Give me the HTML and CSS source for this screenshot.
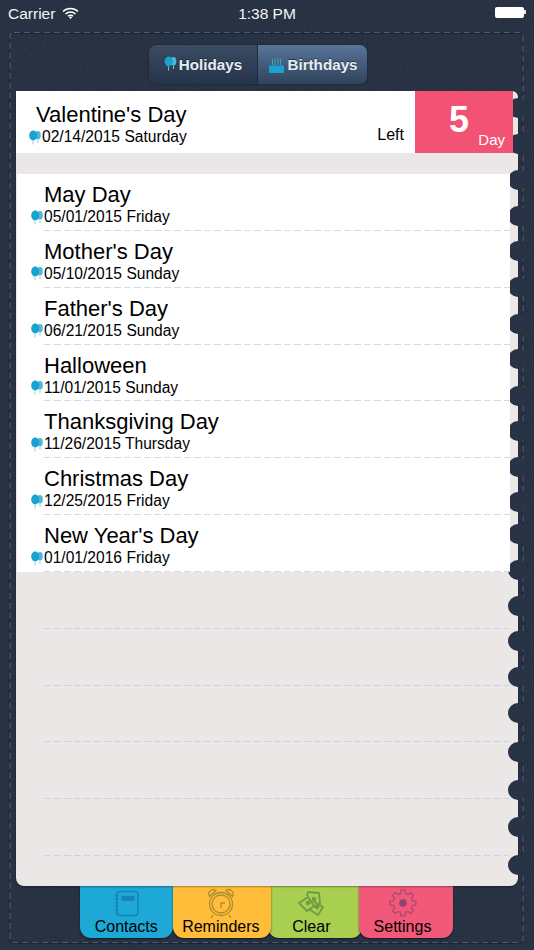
FILE: index.html
```html
<!DOCTYPE html>
<html lang="en">
<head>
<meta charset="utf-8">
<title>Holidays</title>
<link rel="stylesheet" href="styles.css">
</head>
<body>
<svg class="defs" width="0" height="0" aria-hidden="true">
  <symbol id="balloons" viewBox="0 0 12 15">
    <ellipse cx="8.900" cy="5.300" rx="2.900" ry="4.200" fill="#4fb7d9"/>
    <path d="M9 9.500v3.500M4 10.500v4" stroke="#86cfe6" stroke-width=".9" fill="none"/>
    <ellipse cx="4.200" cy="5.500" rx="4" ry="4.900" fill="#17a2d0"/>
  </symbol>
</svg>
<div class="screen">
  <svg class="leather" width="534" height="950" aria-hidden="true">
    <filter id="grain"><feTurbulence type="fractalNoise" baseFrequency="0.8" numOctaves="2" seed="4"/><feColorMatrix values="0 0 0 0 0  0 0 0 0 0  0 0 0 0 0  0 0 0 1.4 -0.55"/></filter>
    <rect width="534" height="950" filter="url(#grain)" opacity=".28"/>
    <rect x="10" y="32.500" width="513" height="910" rx="4" fill="none" stroke="#1b2534" stroke-width="1" transform="translate(-.8 .8)"/>
    <rect x="10" y="32.500" width="513" height="910" rx="4" fill="none" stroke="#4a5a70" stroke-width="1.200" stroke-dasharray="6 4"/>
  </svg>

  <header class="status">
    <div class="status-left">
      <span>Carrier</span>
      <svg class="wifi" viewBox="0 0 17 12" width="17" height="12"><path d="M1 4.500a10.600 10.600 0 0 1 15 0M3.500 7a7 7 0 0 1 10 0M6 9.300a3.500 3.500 0 0 1 5 0" fill="none" stroke="#fff" stroke-width="1.500"/><path d="M8.500 12l-1.500-1.600a2 2 0 0 1 3 0z" fill="#fff"/></svg>
    </div>
    <span class="status-time">1:38 PM</span>
    <div class="status-right"><span class="battery"></span><span class="battery-nub"></span></div>
  </header>

  <nav class="segment">
    <div class="seg seg-off">
      <svg class="seg-icon" width="13" height="15"><use href="#balloons"/></svg>
      <span>Holidays</span>
    </div>
    <div class="seg seg-on">
      <svg class="seg-cake" viewBox="0 0 15 15" width="15" height="15"><path d="M3.500 1v6M6 0v7M9 0v7M11.500 1v6" stroke="#3aa6cf" stroke-width="1" fill="none"/><rect y="7.500" width="15" height="7.500" rx=".8" fill="#1aa3d1"/></svg>
      <span>Birthdays</span>
    </div>
  </nav>

  <main class="page">
    <svg class="holes" width="40" height="795" viewBox="0 0 40 795" aria-hidden="true">
      <g fill="#283345">
        <circle cx="20" cy="17" r="10"/><circle cx="20" cy="53" r="10"/><circle cx="20" cy="89" r="10"/>
        <circle cx="20" cy="125" r="10"/><circle cx="20" cy="160" r="10"/><circle cx="20" cy="196" r="10"/>
        <circle cx="20" cy="233" r="10"/><circle cx="20" cy="268" r="10"/><circle cx="20" cy="305" r="10"/>
        <circle cx="20" cy="340" r="10"/><circle cx="20" cy="376" r="10"/><circle cx="20" cy="411" r="10"/>
        <circle cx="20" cy="443" r="10"/><circle cx="20" cy="479" r="10"/><circle cx="20" cy="515" r="10"/>
        <circle cx="20" cy="550" r="10"/><circle cx="20" cy="586" r="10"/><circle cx="20" cy="622" r="10"/>
        <circle cx="20" cy="661" r="10"/><circle cx="20" cy="699" r="10"/><circle cx="20" cy="736" r="10"/>
        <circle cx="20" cy="774" r="10"/>
      </g>
    </svg>

    <section class="next">
      <div class="next-main">
        <div class="next-title">Valentine's Day</div>
        <div class="date date-next"><svg class="balloon" width="12" height="15"><use href="#balloons"/></svg><span>02/14/2015 Saturday</span></div>
      </div>
      <span class="left-label">Left</span>
      <div class="count"><span class="count-num">5</span><span class="count-unit">Day</span></div>
    </section>

    <section class="list">
      <div class="row"><div class="title">May Day</div><div class="date"><svg class="balloon" width="12" height="15"><use href="#balloons"/></svg><span>05/01/2015 Friday</span></div></div>
      <div class="row"><div class="title">Mother's Day</div><div class="date"><svg class="balloon" width="12" height="15"><use href="#balloons"/></svg><span>05/10/2015 Sunday</span></div></div>
      <div class="row"><div class="title">Father's Day</div><div class="date"><svg class="balloon" width="12" height="15"><use href="#balloons"/></svg><span>06/21/2015 Sunday</span></div></div>
      <div class="row"><div class="title">Halloween</div><div class="date"><svg class="balloon" width="12" height="15"><use href="#balloons"/></svg><span>11/01/2015 Sunday</span></div></div>
      <div class="row"><div class="title">Thanksgiving Day</div><div class="date"><svg class="balloon" width="12" height="15"><use href="#balloons"/></svg><span>11/26/2015 Thursday</span></div></div>
      <div class="row"><div class="title">Christmas Day</div><div class="date"><svg class="balloon" width="12" height="15"><use href="#balloons"/></svg><span>12/25/2015 Friday</span></div></div>
      <div class="row"><div class="title">New Year's Day</div><div class="date"><svg class="balloon" width="12" height="15"><use href="#balloons"/></svg><span>01/01/2016 Friday</span></div></div>
    </section>

    <section class="blanks">
      <div class="row-blank"></div>
      <div class="row-blank"></div>
      <div class="row-blank"></div>
      <div class="row-blank"></div>
      <div class="row-blank"></div>
    </section>
  </main>

  <footer class="tabs">
    <div class="tab tab-blue">
      <svg class="tab-icon" viewBox="0 0 28 28" width="28" height="28" fill="none" stroke="#1683bd" stroke-width="1.500">
        <rect x="5" y="2.500" width="21" height="24" rx="3"/>
        <path d="M2.500 6.500h4M2.500 10h4M2.500 13.500h4M2.500 17h4M2.500 20.500h4M2.500 24h4" stroke-width="1.200"/>
        <rect x="9.500" y="7" width="13" height="5" fill="#1683bd" stroke="none"/>
      </svg>
      <span>Contacts</span>
    </div>
    <div class="tab tab-yellow">
      <svg class="tab-icon tab-icon-clock" viewBox="0 0 28 32" width="28" height="32" fill="none" stroke="#ab8c33" stroke-width="1.300">
        <circle cx="14" cy="17" r="11.500"/>
        <circle cx="14" cy="17" r="9"/>
        <path d="M2.500 9.500A4.500 4.500 0 0 1 9 3.500zM25.500 9.500A4.500 4.500 0 0 0 19 3.500z"/>
        <path d="M14 21v-5h4M6 28l-2 3M22 28l2 3"/>
      </svg>
      <span>Reminders</span>
    </div>
    <div class="tab tab-green">
      <svg class="tab-icon tab-icon-clear" viewBox="0 0 28 28" width="28" height="28" fill="none" stroke="#6f9a43" stroke-width="1.800" stroke-linejoin="round">
        <path d="M2 13l9-6 6 9-7 5z"/>
        <path d="M10 6l1-4 11 1 1 11-6 2"/>
        <path d="M16 11l10 6-5 8-9-6"/>
        <rect x="9" y="11" width="4" height="4" fill="#6f9a43" stroke="none" transform="rotate(-30 11 13)"/>
        <rect x="15" y="7" width="4" height="4" fill="#6f9a43" stroke="none" transform="rotate(10 17 9)"/>
        <rect x="18" y="15" width="4" height="4" fill="#6f9a43" stroke="none" transform="rotate(30 20 17)"/>
      </svg>
      <span>Clear</span>
    </div>
    <div class="tab tab-pink">
      <svg class="tab-icon" viewBox="0 0 28 28" width="28" height="28">
        <path d="M11.630 4.490L11.970 1.160L16.030 1.160L16.370 4.490L19.050 5.600L21.640 3.480L24.520 6.360L22.400 8.950L23.510 11.630L26.840 11.970L26.840 16.030L23.510 16.370L22.400 19.050L24.520 21.640L21.640 24.520L19.050 22.400L16.370 23.510L16.030 26.840L11.970 26.840L11.630 23.510L8.950 22.400L6.360 24.520L3.480 21.640L5.600 19.050L4.490 16.370L1.160 16.030L1.160 11.970L4.490 11.630L5.600 8.950L3.480 6.360L6.360 3.480L8.950 5.600Z" fill="none" stroke="#b34a73" stroke-width="1.500" stroke-linejoin="round"/>
        <circle cx="14" cy="14" r="3.800" fill="#8f4472"/>
      </svg>
      <span>Settings</span>
    </div>
  </footer>
</div>
</body>
</html>
```
FILE: styles.css
```css
* { box-sizing: border-box; }

html, body {
  margin: 0;
  padding: 0;
  background: #2a3547;
}

.defs { position: absolute; }

.screen {
  position: relative;
  width: 534px;
  height: 950px;
  overflow: hidden;
  display: flex;
  flex-direction: column;
  background: #2a3547;
  font-family: "Liberation Sans", Arial, sans-serif;
  color: #000;
}

.leather {
  position: absolute;
  left: 0;
  top: 0;
}

/* status bar */
.status {
  position: relative;
  height: 20px;
  padding: 0 8px;
  display: grid;
  grid-template-columns: 1fr auto 1fr;
  align-items: center;
  color: #f2f4f6;
  font-size: 15.500px;
  line-height: 20px;
  margin-top: 4px;
  margin-bottom: -4px;
}

.status-left {
  display: flex;
  align-items: center;
  gap: 7px;
}

.wifi { margin-top: -3px; }

.status-right {
  display: flex;
  justify-content: flex-end;
  align-items: center;
}

.battery {
  width: 29px;
  height: 11px;
  margin-top: -4px;
  background: #fff;
  border-radius: 2px;
}

.battery-nub {
  width: 1.500px;
  height: 4px;
  margin-top: -4px;
  margin-right: 0.500px;
  background: #e8e8e8;
}

/* segmented control */
.segment {
  position: relative;
  align-self: flex-start;
  display: flex;
  margin: 25px 0 7px 149px;
  width: 218px;
  height: 39px;
  border-radius: 7px;
  overflow: hidden;
  box-shadow: 0 0 2px rgba(15, 22, 32, .9);
}

.seg {
  display: flex;
  align-items: center;
  justify-content: center;
  font-size: 15.200px;
  font-weight: 700;
  color: #e9edf1;
  text-shadow: 0 -1px 0 rgba(15, 22, 32, .6);
}

.seg-off {
  width: 109px;
  gap: 2px;
  background: linear-gradient(#3a4c63, #25344a);
  border-right: 1px solid #1f2b3c;
}

.seg-on {
  width: 109px;
  gap: 3px;
  padding-left: 2px;
  background: linear-gradient(#58759a, #2f435b);
}

.seg-icon { margin-top: -3px; }
.seg-cake { margin-top: 2px; }

/* notebook page */
.page {
  position: relative;
  z-index: 2;
  margin-left: 16px;
  width: 502px;
  height: 795px;
  background: #ebe7e6;
  border-radius: 4px 6px 8px 8px;
  box-shadow: 0 1px 2px rgba(0, 0, 0, .35);
  display: flex;
  flex-direction: column;
}

.holes {
  position: absolute;
  right: -19.500px;
  top: 0;
}

.next {
  position: relative;
  width: 497px;
  height: 62px;
  margin-bottom: 21px;
  display: flex;
  background: #fff;
}

.next-main {
  flex: 1;
  padding: 12px 0 0 13px;
}

.next-title {
  margin-left: 7px;
  font-size: 22px;
  line-height: 24px;
}

.left-label {
  align-self: flex-end;
  margin: 0 11px 9px 0;
  font-size: 16px;
  line-height: 18px;
}

.count {
  position: relative;
  width: 98px;
  height: 62px;
  background: #f25375;
  color: #fff;
}

.count-num {
  position: absolute;
  left: 34px;
  top: 9px;
  font-size: 36px;
  font-weight: 700;
  line-height: 40px;
}

.count-unit {
  position: absolute;
  right: 8px;
  bottom: 4px;
  font-size: 15px;
  line-height: 18px;
}

.list {
  position: relative;
  margin-left: 1px;
  width: 493px;
  background: #fff;
  padding-left: 14px;
}

.blanks {
  position: relative;
  margin-left: 28px;
  width: 465px;
}

.row {
  height: 56.860px;
  padding-top: 9px;
  background-image: repeating-linear-gradient(90deg, #d3dbe3 0 7px, transparent 7px 10px);
  background-size: 100% 1px;
  background-position: 13px 100%;
  background-repeat: no-repeat;
}

.row-blank {
  height: 56.800px;
  background-image: repeating-linear-gradient(90deg, #cbd2da 0 7px, transparent 7px 10px);
  background-size: 100% 1px;
  background-position: 0 100%;
  background-repeat: no-repeat;
}

.title {
  margin-left: 13px;
  font-size: 22px;
  line-height: 24px;
}

.date {
  display: flex;
  align-items: center;
  gap: 1px;
  margin-top: 1px;
  font-size: 15.600px;
  line-height: 18px;
}

.balloon { flex: none; }

/* bottom tabs */
.tabs {
  position: relative;
  z-index: 1;
  display: flex;
  margin-left: 79.500px;
  height: 52px;
}

.tab {
  height: 52px;
  padding-bottom: 2px;
  border-radius: 0 0 11px 11px;
  box-shadow: 0 1px 2px rgba(8, 12, 20, .65);
  display: flex;
  flex-direction: column;
  align-items: center;
  justify-content: space-between;
  font-size: 16px;
  line-height: 18px;
}

.tab-icon { margin-top: 3px; }
.tab-icon-clock { margin-top: 1px; margin-bottom: -4px; }
.tab-icon-clear { margin-top: 4px; }

.tab-blue { width: 93.500px; background: #1ea8d6; }
.tab-yellow { width: 97.700px; padding-right: 2px; background: #ffbd39; }
.tab-green { width: 93.700px; margin-left: -2.700px; padding-right: 7px; background: #a8cf4f; position: relative; z-index: -1; }
.tab-pink { width: 94px; margin-left: -2.700px; padding-right: 7px; background: #f25878; }
```
